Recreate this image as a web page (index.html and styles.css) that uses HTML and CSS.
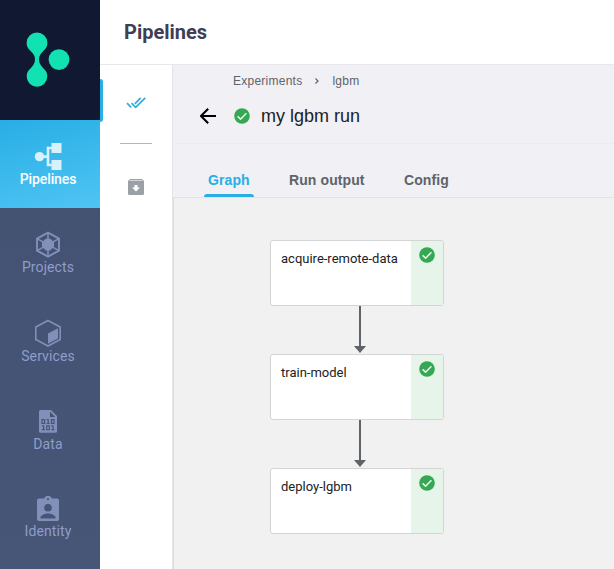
FILE: index.html
```
<!DOCTYPE html>
<html lang="en">
<head>
<meta charset="utf-8">
<title>Pipelines</title>
<link rel="stylesheet" href="styles.css">
</head>
<body>
<svg class="defs" width="0" height="0">
  <symbol id="ok" viewBox="0 0 16 16">
    <circle cx="8" cy="8" r="7.8" fill="#34a853"/>
    <path d="M3.6 8.3 6.6 11.2 12.4 5.3" fill="none" stroke="#e6f4ea" stroke-width="1.6"/>
  </symbol>
</svg>
<div class="app">
  <nav class="sidebar">
    <div class="logo">
      <svg width="100" height="120" viewBox="0 0 100 120" fill="#12e2b2">
        <circle cx="59" cy="59.6" r="10.4"/>
        <path d="M37 32.4a10.4 10.4 0 0 1 10.4 10.4c0 3.2-1.2 5.4-3.4 7.5-3 2.900-5 5.400-5 9.300s2 6.500 5 9.400c2.200 2.100 3.300 4.400 3.300 7.400a10.300 10.300 0 0 1-20.600 0c0-3 1.100-5.300 3.300-7.400 3-2.900 5-5.500 5-9.400s-2-6.400-5-9.300c-2.200-2.100-3.400-4.300-3.400-7.500A10.400 10.400 0 0 1 37 32.400z"/>
      </svg>
    </div>
    <a class="item active">
      <svg width="28" height="28" viewBox="0 0 28 28" fill="#d8f1fc">
        <circle cx="5.500" cy="14.600" r="4.700"/>
        <path d="M17.500 1h10v10h-10zM17.500 18h10v10h-10z"/>
        <path d="M6 14.600h8M18 6h-4v17h4" fill="none" stroke="#d8f1fc" stroke-width="2.600"/>
      </svg>
      <span>Pipelines</span>
    </a>
    <a class="item">
      <svg width="28" height="28" viewBox="0 0 28 28" fill="none" stroke="#8090b9">
        <path d="M14 2.600 25 8.600v12L14 26.600 3 20.600v-12z" stroke-width="1.900"/>
        <path d="M14 2v25M3 8.600l22 12M25 8.600l-22 12" stroke-width="1.500"/>
        <path d="M11.800 9h4.400l3.300 3.400v4.400L16.200 20h-4.400l-3.300-3.200v-4.400z" fill="#8090b9"/>
      </svg>
      <span>Projects</span>
    </a>
    <a class="item low">
      <svg width="28" height="28" viewBox="0 0 28 28" fill="#8090b9">
        <path d="M14 1.500 26.200 8v12.500L14 27 1.800 20.500V8z" fill="none" stroke="#8090b9" stroke-width="1.600"/>
        <path d="M14 14.500 24 9.300v10.200L14 24.800z"/>
      </svg>
      <span>Services</span>
    </a>
    <a class="item low">
      <svg width="28" height="28" viewBox="0 0 28 28">
        <path d="M6.500 3H17l6 6v15.200a1.500 1.500 0 0 1-1.500 1.500h-15A1.500 1.500 0 0 1 5 24.200V4.500A1.500 1.500 0 0 1 6.500 3z" fill="#8090b9"/>
        <path d="M16 4.800V10h5.200z" fill="#455373"/>
        <path d="M8 12.600h2.600v3.800H8zM17.400 12.600H20v3.800h-2.600zM12.700 18.900h2.600v3.800h-2.600zM12.600 12.600h1.600v4.400M8 18.900h1.600v4.400M17.400 18.900H19v4.400" fill="none" stroke="#455373" stroke-width="1.150"/>
        <path d="M12.600 16.400h3.200M7.800 22.700H11M17.200 22.700h3.200" fill="none" stroke="#455373" stroke-width="1"/>
      </svg>
      <span>Data</span>
    </a>
    <a class="item">
      <svg width="28" height="28" viewBox="0 0 28 28" fill="#8090b9">
        <path transform="translate(0 1)" fill-rule="evenodd" d="M5 3.500h5.200a4 4 0 0 1 7.600 0H23a2 2 0 0 1 2 2V24a2 2 0 0 1-2 2H5a2 2 0 0 1-2-2V5.500a2 2 0 0 1 2-2zM14 3a1.100 1.100 0 1 0 0 2.200A1.100 1.100 0 0 0 14 3zM14 9a3.800 3.800 0 1 0 0 7.600A3.800 3.800 0 0 0 14 9zM6.500 23.500h15v-1c0-2.500-5-4-7.500-4s-7.500 1.500-7.500 4z"/>
      </svg>
      <span>Identity</span>
    </a>
  </nav>
  <main class="main">
    <header class="header">Pipelines</header>
    <div class="body">
      <aside class="rail">
        <span class="marker"></span>
        <svg width="20" height="14" viewBox="0 0 20 14" fill="none" stroke="#28aee4" stroke-width="1.700">
          <path d="M1 7.100 5.200 11.300M5.500 7.100 9.700 11.300 19.200 1.800M8.800 7.800 14.700 1.800"/>
        </svg>
        <i class="rule"></i>
        <svg width="16" height="16" viewBox="0 0 16 16">
          <path d="M2 0h12l2 2v12.500a1.500 1.500 0 0 1-1.500 1.500h-13A1.500 1.500 0 0 1 0 14.500V2z" fill="#9aa0a6"/>
          <path d="M2 1.200h12l.7.800H1.300z" fill="#e8eaed"/>
          <path d="M6.500 6h3v2.500H12l-4 4-4-4h2.500z" fill="#fff"/>
        </svg>
      </aside>
      <section class="content">
        <div class="top">
          <div class="crumbs"><span>Experiments</span><svg width="6" height="8" viewBox="0 0 6 8"><path d="M1.500 1.500 4 4 1.500 6.500" fill="none" stroke="#5f6368" stroke-width="1.200"/></svg><span>lgbm</span></div>
          <div class="title">
            <svg class="back" width="16" height="16" viewBox="0 0 16 16"><path d="M16 8H1.500M8.200 .8 1 8l7.200 7.200" fill="none" stroke="#000" stroke-width="2"/></svg>
            <svg class="state" width="16" height="16"><use href="#ok"/></svg>
            <h1>my lgbm run</h1>
          </div>
        </div>
        <div class="tabs">
          <a class="tab on">Graph</a><a class="tab run">Run output</a><a class="tab config">Config</a>
        </div>
        <div class="graph">
          <div class="node"><span>acquire-remote-data</span><div class="status"><svg width="16" height="16"><use href="#ok"/></svg></div></div>
          <svg class="edge" width="14" height="48" viewBox="0 0 14 48"><path d="M7 0v42" stroke="#5f6368" stroke-width="2"/><path d="M1 40h12l-6 7z" fill="#5f6368"/></svg>
          <div class="node"><span>train-model</span><div class="status"><svg width="16" height="16"><use href="#ok"/></svg></div></div>
          <svg class="edge" width="14" height="48" viewBox="0 0 14 48"><path d="M7 0v42" stroke="#5f6368" stroke-width="2"/><path d="M1 40h12l-6 7z" fill="#5f6368"/></svg>
          <div class="node"><span>deploy-lgbm</span><div class="status"><svg width="16" height="16"><use href="#ok"/></svg></div></div>
        </div>
      </section>
    </div>
  </main>
</div>
</body>
</html>
```
FILE: styles.css
```
* { box-sizing: border-box; }
body { margin: 0; font-family: Roboto, sans-serif; }
svg { display: block; flex: none; }
.defs { position: absolute; }
.app { display: flex; width: 614px; height: 569px; overflow: hidden; background: #fff; }
.sidebar { width: 100px; flex: none; background: linear-gradient(#425070, #475577); }
.logo { height: 120px; background: #111831; }
.item {
  display: flex; flex-direction: column; align-items: center;
  height: 88px; padding: 22px 4px 0 0;
  color: #8e9dcb; font-size: 14px; line-height: 18px; letter-spacing: .1px;
}
.item.low { padding-top: 23px; }
.item.active { background: linear-gradient(165deg, #28aee4, #4fc4f4); color: #fff; font-weight: 500; letter-spacing: -.1px; }
.main { flex: 1; min-width: 0; display: flex; flex-direction: column; }
.header {
  height: 65px; padding-left: 24px; border-bottom: 1px solid #e8e8ec;
  font-size: 20px; font-weight: 700; line-height: 64px; color: #423d56;
}
.body { flex: 1; display: flex; }
.rail {
  position: relative; width: 73px; border-right: 1px solid #e4e4e8;
  display: flex; flex-direction: column; align-items: center; padding-top: 31px;
}
.marker { position: absolute; left: 0; top: 14px; width: 3px; height: 43px; background: #28aee4; border-radius: 0 3px 3px 0; }
.rule { width: 32px; height: 1px; margin: 33px 0 35px; background: #b5b5b5; }
.content { flex: 1; display: flex; flex-direction: column; }
.top { height: 79px; background: #f1f0f5; border-bottom: 1px solid #ecebf0; font-family: "Liberation Sans", sans-serif; }
.crumbs {
  display: flex; align-items: center; height: 14px; margin: 9px 0 0 60px;
  font-size: 12px; letter-spacing: .25px; color: #5f6368;
}
.crumbs svg { margin: 0 12px; }
.title { display: flex; align-items: center; height: 24px; margin: 16px 0 0 27px; }
.state { margin: 0 11px 0 18px; }
h1 { margin: 0; font-size: 18px; font-weight: 400; color: #202124; }
.tabs {
  display: flex; height: 54px; padding-left: 31px; background: #f1f0f5; border-bottom: 1px solid #e2e2e8;
  font-family: "Liberation Sans", sans-serif; font-size: 14px; font-weight: 700; letter-spacing: .1px; line-height: 72px; color: #5f6368;
}
.tab { position: relative; }
.on { width: 50px; padding-left: 4px; color: #28aee4; }
.on::after { content: ""; position: absolute; left: 0; bottom: 0; width: 50px; height: 3px; background: #28aee4; border-radius: 3px 3px 0 0; }
.run { margin-left: 35px; width: 115px; }
.graph {
  flex: 1; display: flex; flex-direction: column; align-items: flex-start;
  padding: 42px 0 0 96px; background: #f1f1f1; border-left: 1px solid #dedee2;
}
.node {
  display: flex; justify-content: space-between; width: 174px; height: 66px;
  background: #fff; border: 1px solid #d3d4d5; border-radius: 3px; overflow: hidden;
  font-size: 13px; line-height: 16px; color: #202124;
}
.node > span { padding: 10px 0 0 10px; }
.status { width: 32px; padding: 6px 0 0 8px; background: #e6f4ea; }
.edge { margin-left: 83px; }
```
